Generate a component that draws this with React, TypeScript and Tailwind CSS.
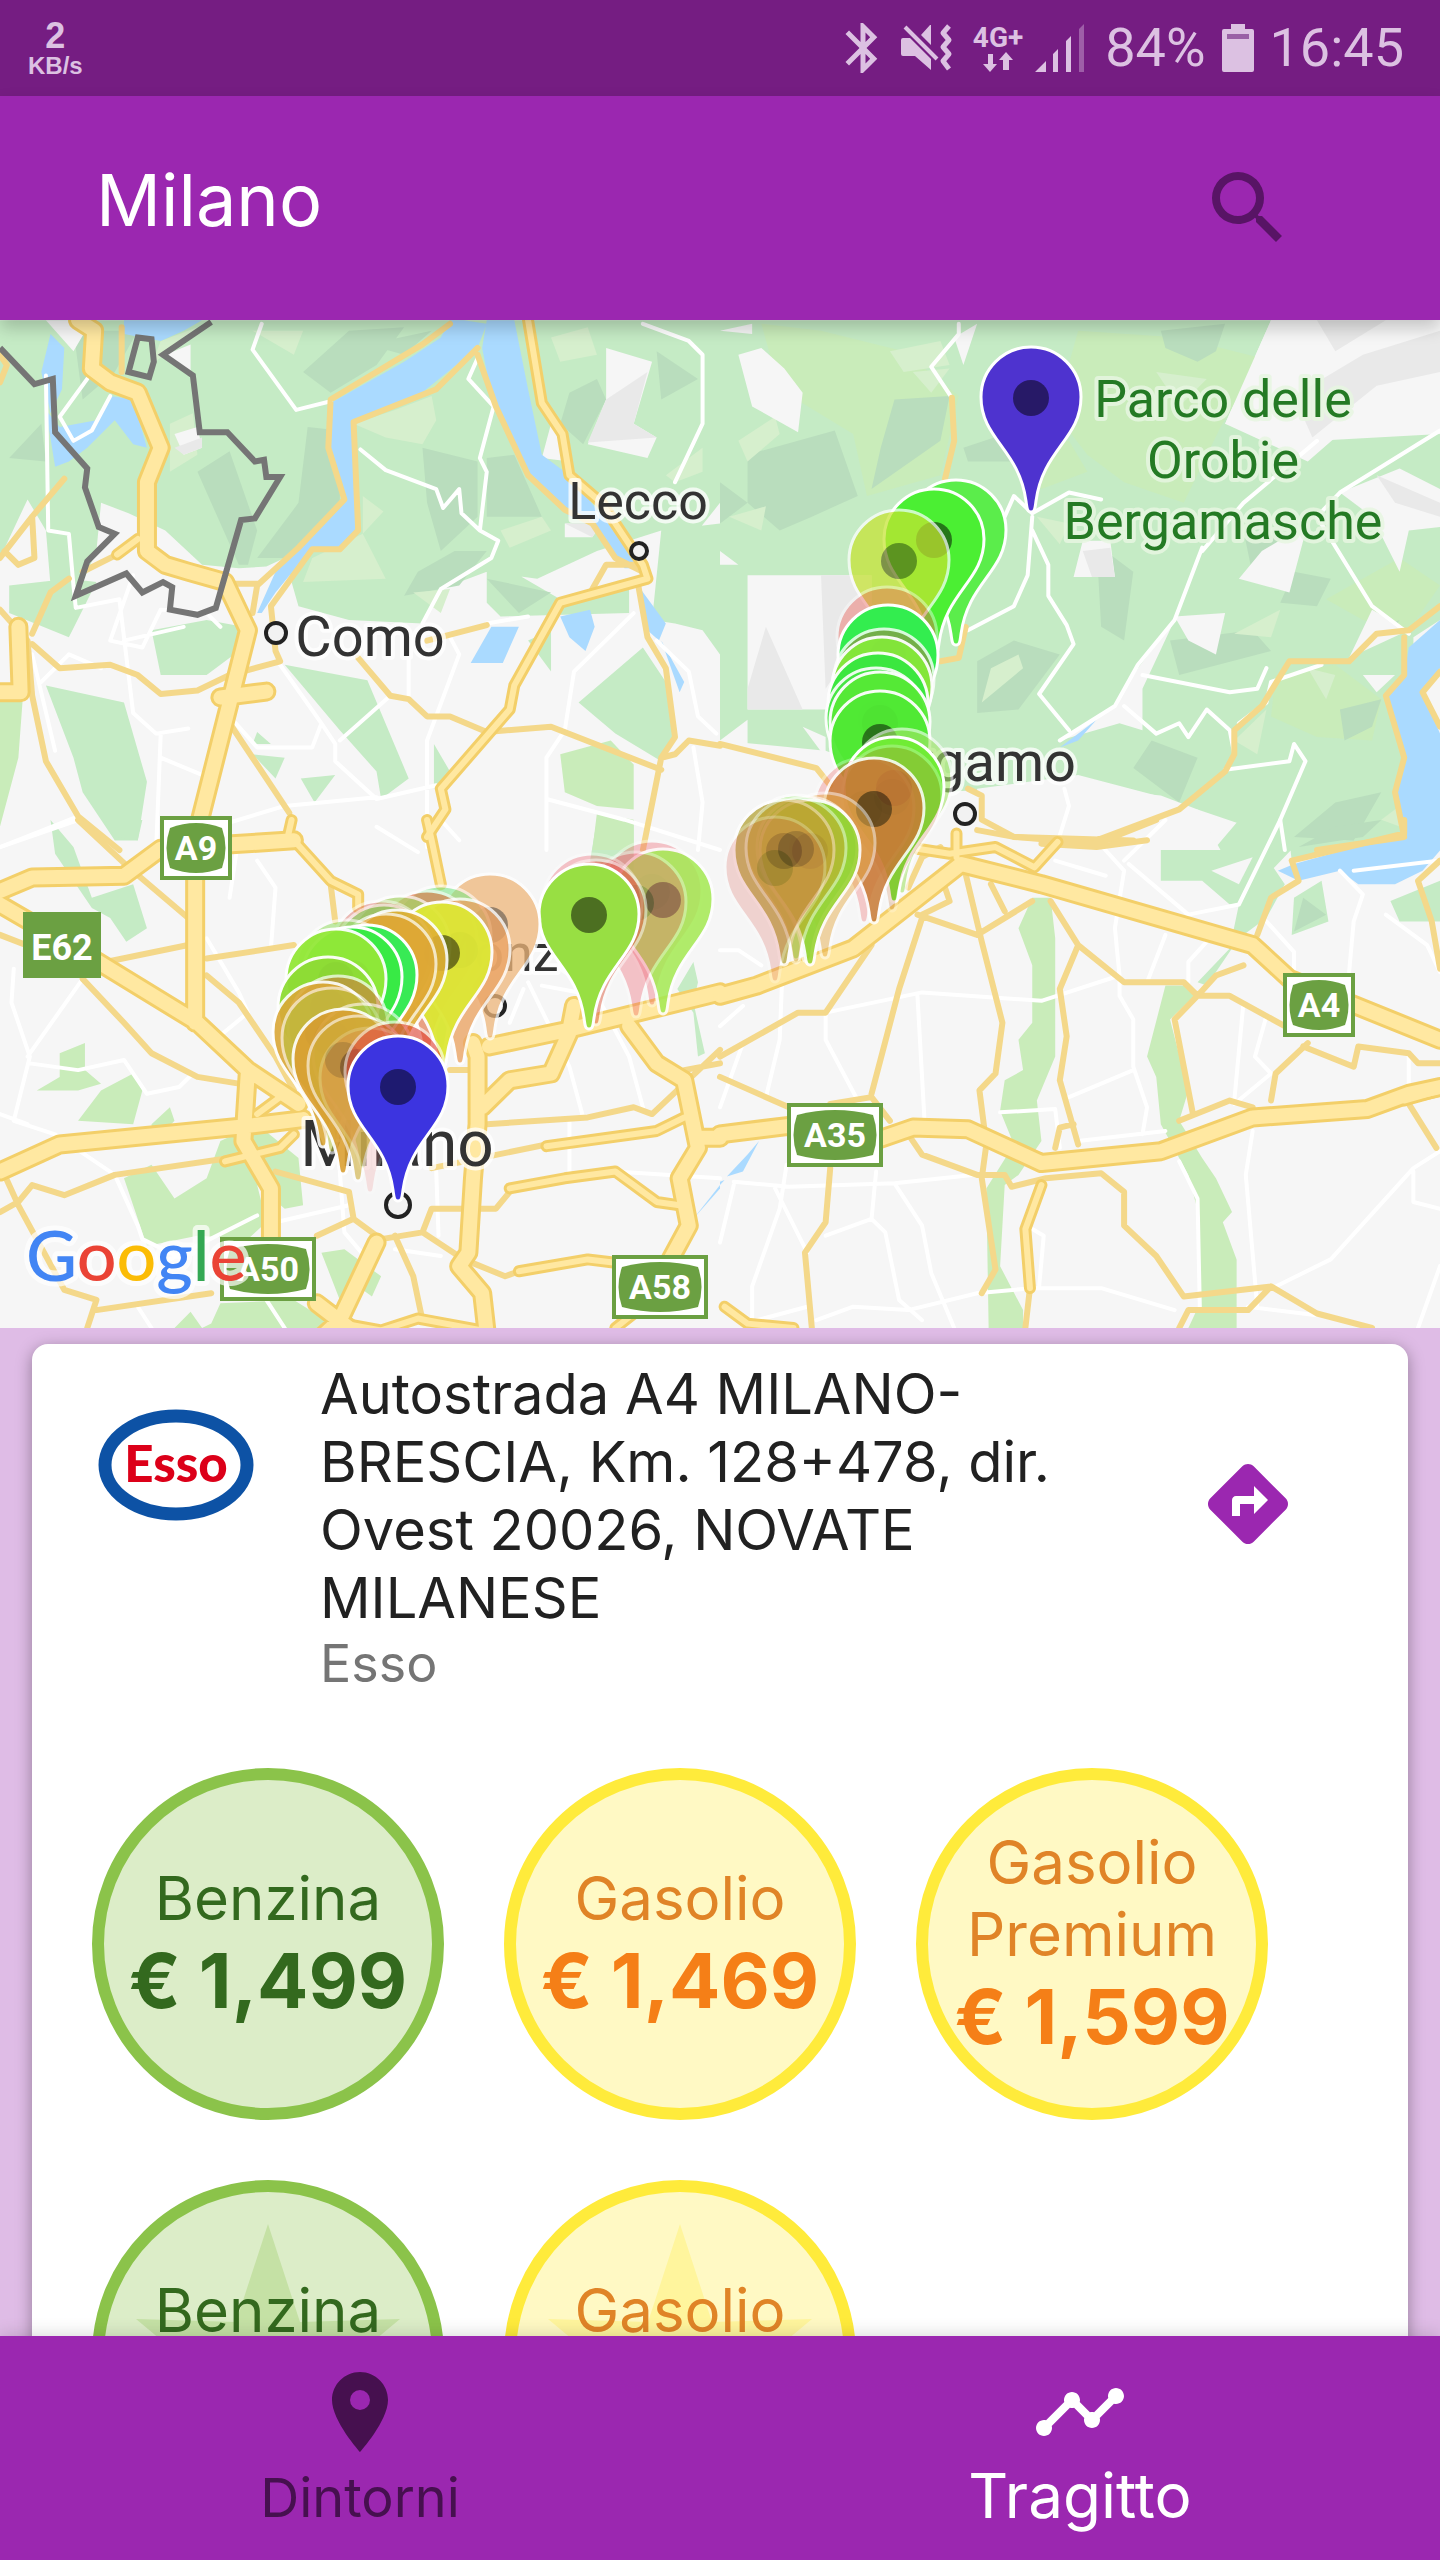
import React from 'react';
import { MdBluetooth, MdDirections, MdLocationOn, MdSearch, MdTimeline } from 'react-icons/md';

// The base map is stored as four quadrants, each with its own grid.
const quadrants = [
  {
    id: 'nw',
    grid: 'matrix(0.4592 0 0 0.3444 0 -10)',
    woods:
      'M0 30H1568V560L1520 640L1440 640L1300 700L1170 780L1060 760L960 810L920 910L760 900L650 860L620 720L580 745L520 750L440 740L360 640L280 590L220 560L210 700L180 790L110 800L100 640L60 550L0 720Z M1420 900L1440 640L1568 620V1000L1530 930L1470 910Z M1060 730L1130 770L1220 840L1370 790V880L1090 890L1060 850Z M20 800L150 780L210 790L180 870L150 950L20 880Z M100 1090L270 1140L320 1370L300 1540L250 1540L180 1400L160 1300Z M330 930L450 900L530 920L520 990L450 1060L350 1060Z M620 1030L800 1075L890 1360L830 1420L820 1340L740 1220Z M655 1360L730 1350L685 1430Z M560 1225L590 1260L550 1260Z M550 1290L620 1300L600 1360Z M1260 1140L1400 980L1450 1080L1470 1240L1440 1310L1340 1230Z M1150 960L1200 930V1050Z M945 1260L980 1340L945 1390Z',
    meadows: 'M0 1110L50 1120L40 1300L0 1500Z M1220 1290L1330 1250L1380 1320V1450L1300 1440L1230 1400Z M1300 1460L1380 1480V1568H1290Z',
    shade:
      'M670 340L740 350V560L640 720H560L650 560Z M660 180L760 60L880 50L820 160L720 240Z M430 470L500 410L560 640L540 740L520 740Z M920 400L1040 440V600L960 700L930 560Z M910 760L990 700L1060 700L1000 800L880 830Z M1060 430L1120 420L1180 600L1060 600Z M160 60L300 60L250 180L180 260Z M20 430L90 330L100 440Z M1240 240L1300 200L1320 260L1270 390L1220 330Z M1430 120L1520 200L1440 260Z M800 100L940 60L880 130Z M1060 780L1200 820L1130 880Z',
    light:
      'M770 330L860 290L940 250L950 320L920 390L840 370Z M1200 80L1280 50L1300 130L1220 150Z M790 540L835 585L790 650Z M680 720L790 650L840 780L660 790Z M1090 640L1180 600L1200 640L1110 690Z M370 330L420 300L430 420L370 470Z M550 60L660 60L640 130Z M900 820L980 810L960 880Z M1450 480L1530 400V470L1470 500Z M350 90L430 50L330 160Z',
    bare: 'M1320 110L1420 150L1380 330L1430 370L1410 430L1280 390L1320 260Z M1230 620L1310 620L1290 660H1230Z M100 30H200L160 120Z M1200 330L1240 440L1180 430Z M380 360L430 340L440 400L400 420Z M360 130L415 100V180Z',
    relief: 'M1320 260L1410 180L1380 330L1430 370L1280 385Z M1230 620L1310 620L1290 660Z M380 400L440 370V400L400 420Z',
    water:
      'M110 70L140 110L135 230L110 300L90 180Z M270 30H440L400 60L350 90L270 70Z M100 290L130 340L210 320L240 250L290 260L320 400L290 390L250 320L190 400L150 440L120 455Z M1010 30L1060 40L1040 110L910 250L770 320L780 650L740 690H680L600 820L570 880H560L600 760L680 640L750 540L720 400V270L880 150L960 80L980 30Z M1060 30H1120L1150 230L1180 420L1240 480L1300 580L1330 620L1390 750H1360L1290 620L1240 600L1150 470L1070 250L1050 110Z M1220 890L1285 870L1295 920L1275 990L1240 950Z M1070 920H1130L1095 1025H1025Z M1395 810L1450 910L1435 960L1410 930Z M1440 960L1490 1080L1480 1110Z',
    streets:
      'M570 40L550 115L645 290L720 265 M1040 140L1020 200L1075 280L1045 430L1060 470L1045 640L1085 670L1070 720L960 810L920 910 M785 405L840 465L950 520L965 575L1000 520L1005 590L1045 640 M1400 40L1500 90L1530 130V330L1470 500 M890 1000V1130 M980 950L1000 1000L930 1250V1560 M610 1030L700 1200L730 1260V1310L820 1420L950 1380 M850 1120L740 1250 M0 1560L170 1470 M160 800L165 865L260 840L290 1170L340 1230L410 1215 M290 770L240 960L310 980L350 870L450 880L480 920 M270 960L400 920 M1380 880L1250 1050L1230 1220L1190 1300V1568 M1190 1420L1360 1480L1568 1568 M1430 960L1500 1050L1520 1180L1560 1230 M1510 1270L1530 1430L1520 1568 M350 1230L340 1568 M500 1180L560 1270L680 1270L700 1200 M470 1500L620 1440L820 1415 M100 190L105 640L150 650L160 800 M240 250L200 350L160 380L130 310L190 200 M350 1300L440 1350 M90 1080L150 1000L220 1040 M70 1000L120 1280 M1150 890L1060 910',
    roads:
      'M980 40L920 100L720 260L715 400L750 550L650 690L560 800L550 880 M1040 110L950 230L770 325L780 640L740 695H680L590 860L600 990L610 1020 M1040 130L1080 280L1150 480L1230 580L1290 620L1340 720L1400 760 M780 1010L850 1120L890 1130L930 1180H980L1060 1225L1200 1210L1440 1335 M930 960L1060 915 M70 970L130 1040L240 1030L300 1060L350 1115L430 1105L500 1060L610 1020 M0 870L60 960L70 1120L100 1310L170 1470L260 1568 M150 780L110 820L70 940 M0 720L70 600L140 490 M70 600L75 720L40 740L10 700 M180 760L270 700 M500 1200L550 1300L630 1460 M1390 800L1410 950L1450 1040L1470 1240L1440 1300L1400 1568 M1440 1300L1470 1290L1500 1250L1568 1265 M265 50V180 M500 795H560 M1290 810L1320 740L1390 740 M0 210L15 160L0 130',
    trunks: 'M1150 30L1180 270L1225 360L1240 480L1310 560L1400 740L1410 780L1220 850L1120 1090L1110 1160L960 1390L970 1450L930 1530 M255 710L300 665',
    motorways: 'M170 30L205 60L200 170L240 210L300 240L350 400L320 500V700L360 740L410 760L490 790L540 930L430 1510 M480 1125L580 1108 M0 1110H45L40 920',
  },
  {
    id: 'ne',
    grid: 'matrix(0.4592 0 0 0.3444 720 -10)',
    woods: 'M0 30H1200L1100 330L1300 380L1568 360V900L1510 950V1568H1300L1040 1450L960 1410L740 1380L480 1400L230 1280L0 1250Z',
    meadows:
      'M90 40L220 60L400 120L520 250L480 480L320 540L290 360L130 230Z M780 60L1000 80L1180 140L1090 340L1010 560L880 500L800 420L730 300Z M1210 1060L1340 1030L1440 1130L1420 1250L1300 1240L1200 1180Z M1320 840L1480 720L1568 800L1500 930L1400 900Z M620 420L760 380L800 470L700 520Z',
    shade:
      'M60 420L250 350L300 540L200 600L130 640L60 560Z M380 260L500 250L480 380L330 520L350 400Z M960 60L1100 40L1080 120L1040 150L970 110Z M530 400L620 360L640 440L540 440Z M560 1020L640 960L740 1000L650 1160L560 1170Z M820 680L900 760L880 960L830 920Z M980 960L1160 930L1200 990L1000 1060Z M1250 760L1330 780L1300 860L1220 850Z M1390 960L1480 900L1450 960Z M1140 640L1230 660L1160 770Z M700 300L780 290L760 360Z M0 500L60 560L0 620Z M940 1250L1040 1300L1000 1430L900 1330Z M1340 1430L1440 1400L1380 1540L1250 1530Z M500 560L560 640L540 720Z M1350 1160L1440 1130L1420 1210L1360 1250Z',
    light:
      'M40 380L120 310L130 360L60 440Z M590 1040L650 1000L660 1040L570 1140Z M370 120L480 90L500 160L400 180Z M1120 940L1220 870L1200 950Z M420 180L500 170L460 240Z M1440 1480L1490 1430L1480 1500Z M20 600L100 570L90 640Z M1120 1250L1190 1160L1170 1290Z M950 180L1060 200L1000 280Z M690 600L760 620L740 680Z M1280 1040L1340 1060L1320 1130Z',
    bare: 'M60 770H330V1160H60Z M40 130L90 110L140 170L180 240L170 355L70 280Z M1200 30H1568V350L1340 370L1280 440L1100 330Z M990 890L1100 880L1080 1000L1020 960Z M790 670H850L860 775H770Z M1180 700L1280 620L1240 820L1130 780Z M1350 530L1480 460L1568 520V630L1500 640L1480 760L1420 600Z M920 1100L990 900L910 1040L860 1150L740 1250L870 1200L920 1220Z M1400 1060H1470L1430 1110Z M1420 870L1500 930L1370 1010Z M180 1210L230 1240V1300Z M560 1390L780 1350L950 1410V1568H560Z M0 60L70 40V70Z M510 80L560 40L530 160Z M0 700L40 740H0Z M950 1460L1040 1450L1090 1568H900Z M0 1250L60 1190V1260L230 1300V1568H0Z',
    relief: 'M220 770H330V900L230 1100Z M60 1100L100 920L180 1160H60Z M1250 250L1400 130L1568 60V180L1430 220L1290 370Z M1300 30H1450L1340 120Z M790 700L850 690L860 775H810Z M1430 480L1568 560V600L1470 560Z',
    water: 'M1568 900L1500 980L1490 1060L1450 1120L1490 1300L1470 1400L1490 1540L1568 1568V1230L1530 1110L1568 1040Z M740 1270L820 1190L780 1250Z',
    streets:
      'M520 40V70L460 165L505 255 M680 600L670 770L640 860L540 930 M680 640L715 740V830L755 915L770 970L695 1115L760 1220 M620 600L640 540L680 590L760 530L830 550 M1050 690L990 900L910 1030L860 1150L740 1250 M920 1060L1110 1110L1170 1100L1190 1040 M1568 350L1350 530L1300 600L1420 860L1500 940 M880 1150L950 1230L1000 1200L1020 1240L1060 1160L1110 1220L1120 1290 M1100 1335L1240 1310L1250 1260L1275 1310L1220 1480L1230 1568 M1310 1030L1200 1080L1190 1140L1130 1200 M750 1390L760 1440L730 1568 M1300 380L1140 560L1050 700',
    roads:
      'M505 255L510 380L490 490 M480 1020L520 1010L535 920 M1568 860L1500 930L1430 940L1370 1020H1240L1180 1150L1120 1220V1290L1100 1340L1000 1450L820 1540 M1490 950V1060L1450 1120L1490 1300L1470 1400L1490 1530L1300 1568 M0 1260L210 1330L240 1380 M540 1390L570 1410V1480L640 1530L900 1540 M1568 1050L1530 1110L1568 1210',
    trunks: '',
    motorways: '',
  },
  {
    id: 'sw',
    grid: 'matrix(0.4592 0 0 0.338 0 500)',
    woods:
      'M110 0L160 80L200 230L290 190L320 320L275 360L240 290L200 260L120 100Z M230 0H310L300 60L250 50Z M1300 0H1380V150L1285 120Z M1475 500L1510 420L1520 480L1510 540L1535 690L1520 700L1510 570Z',
    meadows:
      'M270 1060L330 1020L380 1120L450 1060L480 950L560 900L650 1000L660 1140L620 1150L560 1080L580 1190L540 1240L430 1230L320 1260Z M460 1490L480 1430L640 1420L710 1480V1503H380L415 1455L440 1503Z M700 1280L750 1270L830 1350L810 1410L780 1380L740 1420Z M130 690L185 660V740L220 780L170 800H80L130 760Z M220 800L290 750L310 800L290 900L170 890Z M330 900L370 850L380 890L330 960Z',
    shade: '',
    light: '',
    bare: '',
    relief: '',
    water: 'M1568 1080L1510 1180L1568 1090Z',
    streets:
      'M30 440L25 540L65 700L30 890L120 930L250 1050L300 1200L310 1240L400 1300 M65 720L170 740L270 710L320 810L390 790L420 750 M0 870L60 900 M520 50L500 230 M560 120L600 200L590 380 M450 350L520 510L540 570L460 660 M820 20L910 95 M960 0L1000 60 M1150 480L1240 730L1270 880 M1180 490L1300 520L1370 700L1400 850 M740 1040L750 1220L800 1300 M600 1190L760 1140 M860 1270L960 1290 M1240 890V1040 M1340 1040L1568 1060 M300 1440L330 1503 M580 1420L620 1503 M0 80L170 0 M370 1300L560 1170 M950 1040L955 1230 M180 470L60 700 M1140 500L1110 600',
    roads:
      'M170 0L280 140L410 290 M450 410L640 370 M230 420L410 370 M180 470L270 600L330 690L430 760L520 780 M450 460L520 540L600 700L640 800 M0 340L190 440 M0 1160L40 1130L70 1080L140 1110L250 1050L500 1000 M10 1050L40 1140L140 1390L210 1420L190 1503 M210 1450L460 1400 M600 1040L760 1100L770 1180L830 1240L920 1220L940 1150H1080L1110 1100 M770 1180L690 1230 M920 1220L1010 1300L1100 1350L1130 1335 M860 1230L900 1350L920 1480 M1060 900L1280 880L1380 850L1420 870L1568 680 M940 1030L1190 960 M720 190L730 300 M1490 740L1568 720 M980 740H1040',
    trunks:
      'M640 60L720 180L780 220V260 M930 0L940 60L960 190 M625 60L635 0 M1190 965L1430 920L1490 880 M1110 1090L1230 1060L1340 1040L1430 1130L1480 1140 M1130 1335L1280 1300L1340 1310 M490 1010L610 970L640 930 M1340 1503L1380 1460 M560 870L610 820 M750 1490L830 1510L910 1475L1050 1510',
    motorways:
      'M0 210L70 170L270 165L350 85L470 75L640 60 M425 60V600 M0 250L190 400L430 600L540 740L650 840 M0 1040L130 960L540 905L660 885 M540 740L530 950L590 1090V1240 M820 1250L740 1480L700 1530 M1065 670L1240 620L1568 510 M1030 660L1040 700V900L1030 1060L1020 1280L1000 1320L1050 1400L1060 1520 M1240 620L1250 550 M1240 630L1200 750L1110 770L1050 850 M1370 610L1430 720L1490 770L1520 970L1480 1060L1500 1200L1460 1300 M1520 940H1568 M690 1430L760 1503',
  },
  {
    id: 'se',
    grid: 'matrix(0.4592 0 0 0.338 720 500)',
    woods:
      'M960 70L1080 80L1130 0H1220L1250 80L1130 250L1110 250L1050 180H960Z M1240 60L1300 0H1480V40L1245 120Z M1310 180L1325 300L1245 340L1250 230Z M1460 240L1568 180V300L1480 300Z M810 0L870 30L810 50Z M1200 130L1230 190L1190 290L1130 350L1060 490L1040 480L1110 380L1130 250Z',
    meadows:
      'M680 230H720L730 350V700L690 830L700 950L650 1050L620 1080L610 1320L660 1450V1503H585L580 1090L640 960L610 860L620 770L660 740L650 650L680 600V430L650 320Z M970 490H1010L1040 510L980 590L1020 800L1000 890L1050 1000L1080 1060L1115 1160L1095 1190L1125 1300V1503H1020L1045 1430V1180L1020 1050L960 900L950 760L930 700Z',
    shade: 'M1340 20L1440 0L1400 50L1260 80Z M1270 230L1320 280L1250 330Z',
    light: '',
    bare: 'M1070 150L1160 110L1130 190Z',
    relief: '',
    water: 'M1215 150L1250 130L1490 40V0H1568V90L1530 150L1470 190H1390L1350 150L1260 180Z M85 950L50 1040L15 1055L60 990Z M0 1080L10 1065L0 1070Z',
    streets:
      'M230 570L440 510L700 535L870 460L860 320L880 150L820 60 M870 460V520L900 590V730L930 850L920 930 M760 820L900 740 M430 520L445 880 M230 570V650L300 830 M135 480L130 650L100 820 M50 660L0 850 M30 1070L150 1085L380 1075L550 1050 M380 1075L440 1200L460 1340L510 1503 M340 1040L330 1180L230 1230 M330 1180L360 1220L390 1420L440 1480 M120 1090L190 1280 M30 1080L0 1250 M145 1020L130 1150L70 1380V1503 M80 1480L190 1440 M210 1480L290 1440L410 1450L560 1400L680 1385H830L990 1450 M1000 1010L1040 1120L1045 1450 M1160 920L1145 1050L1170 1440 M1210 1380L1330 1300L1510 1030L1568 980 M1510 1040V1130L1568 1150 M1520 1503L1568 1320 M890 130L1020 280L1130 250L1220 0 M730 120L840 165 M1140 540L1120 830 M1190 580L1165 700L1200 750L1120 840 M780 950L970 920 M610 865L730 855L740 970 M1190 300L1250 390V450 M1350 150L1400 220L1380 300L1370 450 M970 340L930 480 M1060 360L1020 420V480 M1450 280L1540 370L1568 450 M1150 1440L1300 1465 M0 385H40L90 430 M0 610L50 550 M680 1210L705 1230L695 1380 M880 120L970 0 M1380 150L1568 120 M1500 690V810',
    roads:
      'M440 290L390 500L330 810 M430 280L560 340L680 240 M535 160L570 360L615 600L600 750L565 800L580 960L570 1060L600 1330L570 1400 M490 200L500 240L440 280 M590 190L620 270 M330 370L230 570H170L0 700 M720 240L780 370L740 500L755 640L740 770L780 960 M780 370L880 480H1010L1040 520L990 590L1030 870 M1040 520H1110L1230 610 M1140 430L1080 460L1040 520 M1245 120L1260 180L1200 230L1170 340 M1245 120L1490 40V0 M1568 120L1520 180L1550 300L1568 440 M1280 660L1210 750L1200 830 M1270 670L1380 730L1390 670L1500 690L1520 720H1568 M1500 840L1560 970 M240 1030L230 1190L185 1280L200 1503 M0 760L150 850 M240 840L330 820L370 890 M410 930L440 990L560 1050L620 1050L635 1085L710 1060L830 1045L880 1100V1200L950 1290L1010 1410L1200 1380L1150 1450H1020L1000 1503 M1200 1380L1300 1460L1420 1503 M675 1385L665 1503 M1000 890L1110 830L1160 850 M560 30L640 50L820 70L950 0 M700 70L820 80L930 60 M730 970L740 910L770 900 M410 200L440 110L480 80',
    trunks: 'M430 85L500 100L600 80L685 140L735 65 M700 1080L665 1210L675 1385 M10 1440L60 1490L160 1503 M515 40V110 M1490 830L1568 800',
    motorways: 'M0 520L80 490L290 380L525 130L700 190L1160 370L1240 470L1568 650 M0 930L150 905L250 990L420 910L540 915L700 1015L960 980L1160 880L1410 855L1500 810L1568 790',
  },
];

const areaLayers = [
  { key: 'woods', fill: '#c5ebc5' },
  { key: 'meadows', fill: '#c9ecba' },
  { key: 'shade', fill: '#b9ddbd' },
  { key: 'light', fill: '#d6efcd' },
  { key: 'bare', fill: '#f6f6f6' },
  { key: 'relief', fill: '#e9e9e9' },
  { key: 'water', fill: '#aadaff' },
] as const;

const lineLayers = [
  { key: 'streets', stroke: '#ffffff', width: 4 },
  { key: 'roads', stroke: '#f4d88a', width: 6 },
  { key: 'trunks', stroke: '#f3cf69', width: 12 },
  { key: 'motorways', stroke: '#f3cf69', width: 20 },
  { key: 'trunks', stroke: '#ffe8a1', width: 6 },
  { key: 'motorways', stroke: '#ffe8a1', width: 14 },
] as const;

const BORDER =
  'M0 110L75 215L115 200L120 355L190 460L185 515L215 630L250 650L190 730L165 830L275 765L310 820L355 790L375 805L370 870L430 885L470 865L525 610L555 605L610 485H580L575 435L555 440L495 355H435L420 190L355 130L460 35 M300 80L330 85L335 150L325 195L280 180Z';

const towns = [
  { name: 'Lecco', x: 638, y: 199, size: 52, dotX: 639, dotY: 231, r: 8 },
  { name: 'Como', x: 370, y: 336, size: 56, dotX: 276, dotY: 313, r: 10 },
  { name: 'Bergamo', x: 963, y: 461, size: 56, dotX: 965, dotY: 494, r: 10 },
  { name: 'Monza', x: 508, y: 651, size: 52, dotX: 495, dotY: 686, r: 10 },
  { name: 'Milano', x: 397, y: 846, size: 64, dotX: 398, dotY: 885, r: 12 },
];

const park = [
  { text: 'Parco delle', y: 97 },
  { text: 'Orobie', y: 158 },
  { text: 'Bergamasche', y: 219 },
];

const shields = [
  { name: 'A9', x: 160, y: 496, w: 72 },
  { name: 'A4', x: 1283, y: 653, w: 72 },
  { name: 'A35', x: 787, y: 783, w: 96 },
  { name: 'A50', x: 220, y: 917, w: 96 },
  { name: 'A58', x: 612, y: 935, w: 96 },
];

const pins = [
  { x: 1031, y: 191, color: '#4e33cf', opacity: 1 },
  { x: 956, y: 324, color: '#5bed4b', opacity: 1 },
  { x: 934, y: 333, color: '#4bef33', opacity: 1 },
  { x: 899, y: 354, color: '#c6e432', opacity: 0.72 },
  { x: 887, y: 431, color: '#ee5a50', opacity: 0.4 },
  { x: 888, y: 449, color: '#33ed4f', opacity: 1 },
  { x: 884, y: 473, color: '#84a048', opacity: 0.8 },
  { x: 882, y: 481, color: '#84e93a', opacity: 0.95 },
  { x: 878, y: 497, color: '#38e840', opacity: 0.95 },
  { x: 876, y: 512, color: '#48e545', opacity: 0.9 },
  { x: 880, y: 516, color: '#56ea36', opacity: 0.95 },
  { x: 880, y: 535, color: '#50e934', opacity: 0.95 },
  { x: 902, y: 573, color: '#a5e56a', opacity: 0.6 },
  { x: 894, y: 581, color: '#70ec35', opacity: 1 },
  { x: 864, y: 602, color: '#ee6060', opacity: 0.3 },
  { x: 892, y: 590, color: '#c07038', opacity: 0.25 },
  { x: 874, y: 602, color: '#c87a35', opacity: 0.85 },
  { x: 825, y: 637, color: '#e8b050', opacity: 0.5 },
  { x: 796, y: 639, color: '#7fe84a', opacity: 0.6 },
  { x: 807, y: 641, color: '#55e060', opacity: 0.6 },
  { x: 810, y: 644, color: '#98d433', opacity: 0.9 },
  { x: 784, y: 644, color: '#b3a236', opacity: 0.75 },
  { x: 796, y: 642, color: '#d0a030', opacity: 0.45 },
  { x: 775, y: 661, color: '#dd6a60', opacity: 0.25 },
  { x: 652, y: 685, color: '#ee6070', opacity: 0.35 },
  { x: 663, y: 693, color: '#a4ea52', opacity: 0.85 },
  { x: 636, y: 696, color: '#ee6070', opacity: 0.35 },
  { x: 592, y: 698, color: '#ee6070', opacity: 0.35 },
  { x: 596, y: 704, color: '#dd6044', opacity: 0.5 },
  { x: 589, y: 708, color: '#98df43', opacity: 1 },
  { x: 490, y: 718, color: '#eeb67a', opacity: 0.75 },
  { x: 441, y: 730, color: '#7ee88a', opacity: 0.6 },
  { x: 427, y: 735, color: '#e06a3a', opacity: 0.6 },
  { x: 460, y: 743, color: '#eba566', opacity: 0.8 },
  { x: 400, y: 740, color: '#a8d468', opacity: 0.7 },
  { x: 442, y: 746, color: '#dde735', opacity: 0.95 },
  { x: 381, y: 745, color: '#e07a70', opacity: 0.5 },
  { x: 384, y: 749, color: '#7ed058', opacity: 0.6 },
  { x: 397, y: 754, color: '#e0b035', opacity: 0.9 },
  { x: 386, y: 758, color: '#e0a535', opacity: 0.7 },
  { x: 346, y: 764, color: '#9be070', opacity: 0.6 },
  { x: 367, y: 769, color: '#38ea55', opacity: 1 },
  { x: 352, y: 771, color: '#38ea45', opacity: 1 },
  { x: 336, y: 773, color: '#93e838', opacity: 0.95 },
  { x: 328, y: 801, color: '#8edc35', opacity: 0.95 },
  { x: 338, y: 820, color: '#c88a40', opacity: 0.7 },
  { x: 323, y: 826, color: '#dba838', opacity: 0.9 },
  { x: 332, y: 832, color: '#b8c040', opacity: 0.6 },
  { x: 363, y: 848, color: '#9bd64a', opacity: 0.6 },
  { x: 343, y: 853, color: '#dba033', opacity: 0.9 },
  { x: 358, y: 860, color: '#cfae3a', opacity: 0.6 },
  { x: 395, y: 866, color: '#e04030', opacity: 0.6 },
  { x: 370, y: 872, color: '#ee8080', opacity: 0.2 },
  { x: 398, y: 880, color: '#3c34e0', opacity: 1 },
];

const googleLetters = [
  { char: 'G', color: '#4285f4' },
  { char: 'o', color: '#ea4335' },
  { char: 'o', color: '#fbbc05' },
  { char: 'g', color: '#4285f4' },
  { char: 'l', color: '#34a853' },
  { char: 'e', color: '#ea4335' },
];

type Fuel = { name: string; price: string; tone: 'green' | 'yellow'; star: boolean };

const fuels: Fuel[] = [
  { name: 'Benzina', price: '€ 1,499', tone: 'green', star: false },
  { name: 'Gasolio', price: '€ 1,469', tone: 'yellow', star: false },
  { name: 'Gasolio Premium', price: '€ 1,599', tone: 'yellow', star: false },
  { name: 'Benzina', price: '€ 1,499', tone: 'green', star: true },
  { name: 'Gasolio', price: '€ 1,469', tone: 'yellow', star: true },
];

const StatusBar: React.FC = () => (
  <div className="flex h-24 shrink-0 items-center justify-between bg-[#751d82] pl-7 pr-9 font-['Roboto',sans-serif] text-[#dcc1e2]">
    <div className="flex flex-col items-center font-['Liberation_Sans',sans-serif] font-bold">
      <span className="text-4xl leading-9">2</span>
      <span className="text-2xl leading-6">KB/s</span>
    </div>
    <div className="flex items-center gap-5">
      <MdBluetooth className="-mx-3 h-[60px] w-[60px]" />
      <svg className="h-12 w-[52px]" viewBox="0 0 52 48" fill="currentColor">
        <path d="M2 14h7l21 21V46L14 32H2Q0 32 0 30V16Q0 14 2 14ZM20 11L29 1H30V21Z" />
        <path d="M4 3L36 35" stroke="currentColor" strokeWidth="4" />
        <path d="M48 2L42 9L48 16L42 23L48 30L42 37L48 45" fill="none" stroke="currentColor" strokeWidth="5" strokeLinejoin="round" />
      </svg>
      <div className="flex flex-col items-center">
        <span className="text-[28px] font-bold leading-7">4G+</span>
        <svg className="h-5 w-8" viewBox="0 0 32 20" fill="currentColor">
          <path d="M6 2H11V12H15L8 20L1 12H6ZM21 18V8H17L24 0L31 8H27V18Z" />
        </svg>
      </div>
      <svg className="-ml-2 h-12 w-[50px]" viewBox="0 0 50 48" fill="currentColor">
        <path d="M0 48L11 37V48ZM18 30L23 25V48H18ZM31 17L36 12V48H31Z" />
        <path d="M44 5L49 0V48H44Z" opacity=".4" />
      </svg>
      <span className="text-[54px] leading-none">84%</span>
      <svg className="-mx-1 h-12 w-8" viewBox="0 0 32 48" fill="currentColor">
        <path d="M9 0H23V5H30Q32 5 32 7V46Q32 48 30 48H2Q0 48 0 46V7Q0 5 2 5H9Z" />
        <path d="M5 10H27V15H5Z" fill="#9a61a6" />
      </svg>
      <span className="text-[54px] leading-none">16:45</span>
    </div>
  </div>
);

const AppBar: React.FC = () => (
  <header className="relative z-10 flex h-56 shrink-0 items-center justify-between bg-[#9b27b0] px-24 shadow-[0_8px_16px_rgba(0,0,0,0.2)]">
    <h1 className="pb-4 text-[72px] leading-none text-white">Milano</h1>
    <button aria-label="Cerca" className="flex h-48 w-48 items-center justify-center text-[#581465]">
      <MdSearch className="h-24 w-24" />
    </button>
  </header>
);

const Pin: React.FC<{ x: number; y: number; color: string; opacity: number }> = ({ x, y, color, opacity }) => (
  <g transform={`translate(${x} ${y})`} opacity={opacity}>
    <path
      d="M0 1C-4 1 -4 -3 -5 -10C-12 -62 -50 -72 -50 -114A50 50 0 0 1 50 -114C50 -72 12 -62 5 -10C4 -3 4 1 0 1Z"
      fill={color}
      stroke="#fff"
      strokeWidth="3"
    />
    <circle cy="-113" r="18" fill="#000" opacity=".5" />
  </g>
);

const RouteMap: React.FC = () => (
  <svg
    className="block min-h-0 w-full flex-1 bg-[#f6f6f6] font-['Roboto',sans-serif]"
    viewBox="0 0 1440 1008"
    preserveAspectRatio="xMidYMid slice"
    role="img"
    aria-label="Mappa del tragitto"
  >
    {areaLayers.map((layer) =>
      quadrants.map((q) => <path key={layer.key + q.id} transform={q.grid} d={q[layer.key]} fill={layer.fill} />)
    )}
    {lineLayers.map((layer, i) =>
      quadrants.map((q) => (
        <path
          key={i + q.id}
          transform={q.grid}
          d={q[layer.key]}
          fill="none"
          stroke={layer.stroke}
          strokeWidth={layer.width}
          strokeLinejoin="round"
          strokeLinecap="round"
          vectorEffect="non-scaling-stroke"
        />
      ))
    )}
    <path transform={quadrants[0].grid} d={BORDER} fill="none" stroke="#757575" strokeWidth="6" vectorEffect="non-scaling-stroke" />

    {towns.map((town) => (
      <g key={town.name}>
        <text
          x={town.x}
          y={town.y}
          fontSize={town.size}
          textAnchor="middle"
          fill="#333"
          stroke="#fff"
          strokeOpacity=".75"
          strokeWidth="8"
          strokeLinejoin="round"
          paintOrder="stroke"
        >
          {town.name}
        </text>
        <circle cx={town.dotX} cy={town.dotY} r={town.r} fill="#f2f2f2" stroke="#222" strokeWidth="4" />
      </g>
    ))}
    {park.map((line) => (
      <text
        key={line.text}
        x="1223"
        y={line.y}
        fontSize="52"
        textAnchor="middle"
        fill="#247a24"
        stroke="#e6f6e0"
        strokeOpacity=".85"
        strokeWidth="8"
        strokeLinejoin="round"
        paintOrder="stroke"
      >
        {line.text}
      </text>
    ))}

    {shields.map((s) => (
      <g key={s.name} transform={`translate(${s.x} ${s.y})`}>
        <rect x="2" y="2" width={s.w - 4} height="60" fill="#fff" stroke="#6ba042" strokeWidth="4" />
        <path
          d={`M10 12Q${s.w / 2} 2 ${s.w - 10} 12Q${s.w - 3} 32 ${s.w - 10} 52Q${s.w / 2} 62 10 52Q3 32 10 12Z`}
          fill="#6ba042"
        />
        <text x={s.w / 2} y="44" fontSize="34" fontWeight="700" textAnchor="middle" fill="#fff">
          {s.name}
        </text>
      </g>
    ))}
    <rect x="23" y="592" width="78" height="66" fill="#6ba042" />
    <text x="62" y="640" fontSize="36" fontWeight="700" textAnchor="middle" fill="#fff">
      E62
    </text>

    {pins.map((pin) => (
      <Pin key={`${pin.x}-${pin.y}`} {...pin} />
    ))}

    <text
      x="26"
      y="961"
      fontSize="70"
      className="font-['Lato',sans-serif]"
      fontWeight="500"
      stroke="#fff"
      strokeOpacity=".7"
      strokeWidth="10"
      strokeLinejoin="round"
      paintOrder="stroke"
    >
      {googleLetters.map((l, i) => (
        <tspan key={i} fill={l.color}>
          {l.char}
        </tspan>
      ))}
    </text>
  </svg>
);

const EssoLogo: React.FC = () => (
  <svg className="mt-6 h-40 w-40 shrink-0" viewBox="0 0 160 160" role="img" aria-label="Esso">
    <ellipse cx="80" cy="81" rx="71" ry="49" fill="#fff" stroke="#0d52a5" strokeWidth="13" />
    <text x="80" y="98" fontSize="51" fontWeight="900" textAnchor="middle" fill="#dc0019" className="font-['Lato',sans-serif]">
      Esso
    </text>
  </svg>
);

const FuelBadge: React.FC<{ fuel: Fuel }> = ({ fuel }) => {
  const green = fuel.tone === 'green';
  return (
    <li
      className={`relative flex h-[352px] w-[352px] flex-col items-center justify-center rounded-full border-12 text-center ${
        green ? 'border-[#8bc34a] bg-[#dcedc8] text-[#33691e]' : 'border-[#ffeb3b] bg-[#fff9c4] text-[#f57f17]'
      }`}
    >
      {fuel.star && (
        <svg
          className={`absolute inset-0 h-full w-full ${green ? 'text-[#c5e1a5]' : 'text-[#fff59d]'}`}
          viewBox="0 0 328 328"
          fill="currentColor"
        >
          <path d="M164 32L196 130L296 127L217 193L246 292L164 233L82 292L111 193L32 127L132 130Z" />
        </svg>
      )}
      <span className={`relative w-[280px] text-[60px] leading-[72px] ${green ? '' : 'text-[#e08427]'}`}>{fuel.name}</span>
      <span className="relative whitespace-nowrap text-[76px] font-bold leading-[92px]">{fuel.price}</span>
    </li>
  );
};

const StationCard: React.FC = () => (
  <article className="min-h-[1200px] rounded-2xl bg-white pt-4 shadow-[0_4px_16px_rgba(0,0,0,0.35)]">
    <div className="flex items-start px-16">
      <EssoLogo />
      <div className="ml-16 min-w-0 flex-1">
        <h2 className="text-[56px] leading-[68px] text-[#212121]">
          Autostrada A4 MILANO-BRESCIA, Km. 128+478, dir. Ovest 20026, NOVATE MILANESE
        </h2>
        <p className="text-[52px] leading-[64px] text-[#757575]">Esso</p>
      </div>
      <button aria-label="Indicazioni" className="mt-12 flex h-48 w-48 shrink-0 items-center justify-center text-[#9b27b0]">
        <MdDirections className="h-24 w-24" />
      </button>
    </div>
    <ul className="mt-18 flex flex-wrap gap-15 px-15">
      {fuels.map((fuel, i) => (
        <FuelBadge key={i} fuel={fuel} />
      ))}
    </ul>
  </article>
);

const BottomNav: React.FC = () => (
  <nav className="relative z-10 flex h-56 shrink-0 bg-[#9b27b0] shadow-[0_-2px_16px_rgba(0,0,0,0.15)]">
    <button className="flex flex-1 flex-col items-center pt-7 text-[#46104f]">
      <MdLocationOn className="h-24 w-24" />
      <span className="text-[54px] leading-[76px]">Dintorni</span>
    </button>
    <button className="flex flex-1 flex-col items-center pt-7 text-white">
      <MdTimeline className="h-24 w-24" />
      <span className="text-[62px] leading-[72px]">Tragitto</span>
    </button>
  </nav>
);

const App: React.FC = () => {
  return (
    <div className="flex h-screen flex-col overflow-hidden bg-[#dfbce6] font-['Inter',sans-serif]">
      <StatusBar />
      <AppBar />
      <RouteMap />
      <main className="min-h-0 flex-1 overflow-hidden">
        <div className="px-8 pt-4">
          <StationCard />
        </div>
      </main>
      <BottomNav />
    </div>
  );
};

export default App;
